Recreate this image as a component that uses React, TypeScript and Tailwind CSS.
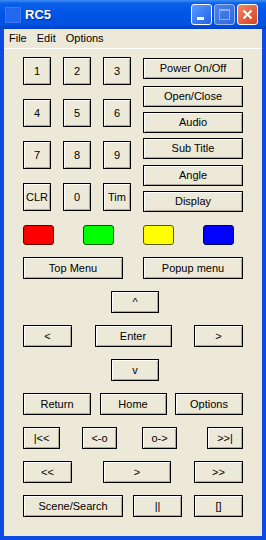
const btn =
  "flex items-center justify-center border border-black bg-[#ece9d8] shadow-[inset_1px_1px_0_#fff,inset_-1px_-1px_0_#aca899] text-[11px] leading-none text-black";

function Btn({ label, className }: { label: string; className: string }) {
  return <div className={`${btn} ${className}`}>{label}</div>;
}

export default function App() {
  return (
    <div className="flex h-[540px] w-[266px] flex-col bg-[#0b4be0] font-['Liberation_Sans',Arial,sans-serif]">
      {/* Title bar */}
      <div className="flex h-[29px] shrink-0 items-center bg-[linear-gradient(to_bottom,#3d8cf5_0%,#0a5fea_12%,#0055e5_45%,#0052e0_85%,#0040c8_100%)] pl-[5px] pr-[8px]">
        <div className="h-[16px] w-[16px] bg-[#2467ef] shadow-[inset_0_0_0_1px_#3a78f0]" />
        <span className="ml-[4px] text-[13px] font-bold text-white [text-shadow:1px_1px_0_#0a2f9a]">
          RC5
        </span>
        <div className="ml-auto flex gap-[2px]">
          <div className="relative h-[21px] w-[21px] rounded-[3px] border border-white bg-[linear-gradient(135deg,#5a9cff,#2260e8)]">
            <div className="absolute bottom-[4px] left-[5px] h-[3px] w-[7px] bg-white" />
          </div>
          <div className="relative h-[21px] w-[21px] rounded-[3px] border border-[#9ab8f0] bg-[linear-gradient(135deg,#4a86f0,#2f68e0)]">
            <div className="absolute left-[4px] top-[4px] h-[11px] w-[11px] border border-[#8fb0ee] border-t-[2px]" />
          </div>
          <div className="flex h-[21px] w-[21px] items-center justify-center rounded-[3px] border border-white bg-[linear-gradient(135deg,#f08a6a,#d8401c)]">
            <svg width="11" height="11" viewBox="0 0 11 11">
              <path d="M1.5 1.5 L9.5 9.5 M9.5 1.5 L1.5 9.5" stroke="#fff" strokeWidth="2" />
            </svg>
          </div>
        </div>
      </div>

      {/* Client area */}
      <div className="mx-[4px] mb-[4px] flex flex-1 flex-col bg-[#ece9d8]">
        {/* Menu bar */}
        <div className="flex h-[20px] items-center gap-[10px] border-b border-white pl-[5px] text-[11px] text-black">
          <span>File</span>
          <span>Edit</span>
          <span>Options</span>
        </div>

        <div className="flex flex-col px-[19px] pt-[8px]">
          {/* Keypad + functions */}
          <div className="flex gap-[12px]">
            <div className="flex flex-col gap-[14px]">
              <div className="flex gap-[12px]">
                <Btn label="1" className="h-[28px] w-[28px]" />
                <Btn label="2" className="h-[28px] w-[28px]" />
                <Btn label="3" className="h-[28px] w-[28px]" />
              </div>
              <div className="flex gap-[12px]">
                <Btn label="4" className="h-[28px] w-[28px]" />
                <Btn label="5" className="h-[28px] w-[28px]" />
                <Btn label="6" className="h-[28px] w-[28px]" />
              </div>
              <div className="flex gap-[12px]">
                <Btn label="7" className="h-[28px] w-[28px]" />
                <Btn label="8" className="h-[28px] w-[28px]" />
                <Btn label="9" className="h-[28px] w-[28px]" />
              </div>
              <div className="flex gap-[12px]">
                <Btn label="CLR" className="h-[28px] w-[28px]" />
                <Btn label="0" className="h-[28px] w-[28px]" />
                <Btn label="Tim" className="h-[28px] w-[28px]" />
              </div>
            </div>
            <div className="flex w-[100px] flex-col pt-[1px]">
              <Btn label="Power On/Off" className="h-[21px] w-full" />
              <Btn label="Open/Close" className="mt-[7px] h-[21px] w-full" />
              <Btn label="Audio" className="mt-[5px] h-[21px] w-full" />
              <Btn label="Sub Title" className="mt-[5px] h-[21px] w-full" />
              <Btn label="Angle" className="mt-[6px] h-[21px] w-full" />
              <Btn label="Display" className="mt-[5px] h-[21px] w-full" />
            </div>
          </div>

          {/* Colour keys */}
          <div className="mt-[13px] flex gap-[29px]">
            <div className="h-[20px] w-[31px] rounded-[3px] border border-[#5a0000] bg-[#ff0000]" />
            <div className="h-[20px] w-[31px] rounded-[3px] border border-[#005a00] bg-[#00ff00]" />
            <div className="h-[20px] w-[31px] rounded-[3px] border border-[#5a5a00] bg-[#ffff00]" />
            <div className="h-[20px] w-[31px] rounded-[3px] border border-[#00005a] bg-[#0000ff]" />
          </div>

          <div className="mt-[12px] flex flex-col gap-[12px]">
            <div className="flex justify-between">
              <Btn label="Top Menu" className="h-[22px] w-[100px]" />
              <Btn label="Popup menu" className="h-[22px] w-[100px]" />
            </div>
            <div className="flex">
              <Btn label="^" className="ml-[88px] h-[22px] w-[48px]" />
            </div>
            <div className="flex justify-between">
              <Btn label="<" className="h-[22px] w-[49px]" />
              <Btn label="Enter" className="h-[22px] w-[77px]" />
              <Btn label=">" className="h-[22px] w-[49px]" />
            </div>
            <div className="flex">
              <Btn label="v" className="ml-[88px] h-[22px] w-[48px]" />
            </div>
            <div className="flex justify-between">
              <Btn label="Return" className="h-[22px] w-[68px]" />
              <Btn label="Home" className="h-[22px] w-[67px]" />
              <Btn label="Options" className="h-[22px] w-[68px]" />
            </div>
            <div className="flex">
              <Btn label="|<<" className="h-[22px] w-[37px]" />
              <Btn label="<-o" className="ml-[22px] h-[22px] w-[35px]" />
              <Btn label="o->" className="ml-[25px] h-[22px] w-[35px]" />
              <Btn label=">>|" className="ml-auto h-[22px] w-[36px]" />
            </div>
            <div className="flex">
              <Btn label="<<" className="h-[22px] w-[49px]" />
              <Btn label=">" className="ml-[31px] h-[22px] w-[68px]" />
              <Btn label=">>" className="ml-auto h-[22px] w-[49px]" />
            </div>
            <div className="flex">
              <Btn label="Scene/Search" className="h-[22px] w-[100px]" />
              <Btn label="||" className="ml-[10px] h-[22px] w-[49px]" />
              <Btn label="[]" className="ml-auto h-[22px] w-[49px]" />
            </div>
          </div>
        </div>
      </div>
    </div>
  );
}
